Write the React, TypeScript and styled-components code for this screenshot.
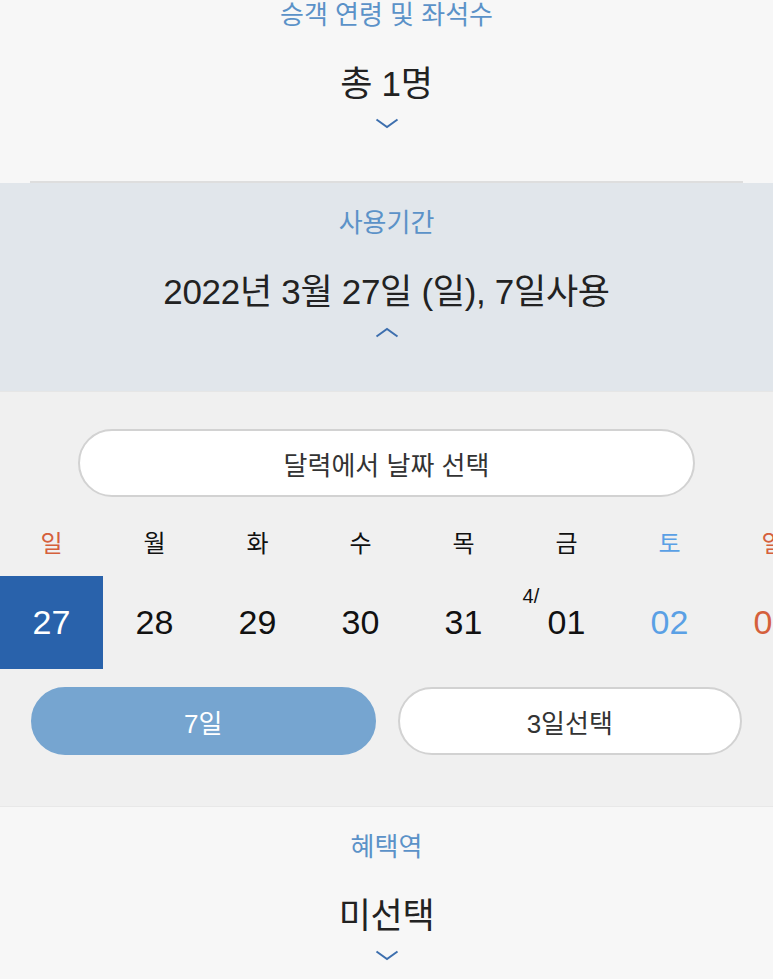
import styled, { createGlobalStyle } from 'styled-components'

const GlobalStyle = createGlobalStyle`
  html, body {
    margin: 0;
    padding: 0;
    background: #f7f7f7;
    overflow: hidden;
  }
  body {
    font-family: "Liberation Sans", "Noto Sans CJK KR", sans-serif;
    color: #222222;
  }
`

const Page = styled.div`
  width: 773px;
  height: 979px;
  overflow: hidden;
  display: flex;
  flex-direction: column;
`

const Section = styled.section<{ $tone?: 'plain' | 'active'; $offset?: number; $divider?: boolean }>`
  flex: none;
  height: 208px;
  box-sizing: border-box;
  margin-top: ${(p) => (p.$offset ? `${p.$offset}px` : '0')};
  padding-top: 26px;
  display: flex;
  flex-direction: column;
  align-items: center;
  background: ${(p) => (p.$tone === 'active' ? '#e1e6eb' : '#f7f7f7')};
  position: relative;

  ${(p) =>
    p.$divider &&
    `
    &::after {
      content: '';
      position: absolute;
      left: 30px;
      right: 30px;
      bottom: 0;
      height: 2px;
      background: #dedede;
    }
  `}
`

const SectionTitle = styled.div`
  font-size: 26px;
  line-height: 28px;
  color: #5b92c8;
`

const SectionValue = styled.div`
  margin-top: 35px;
  font-size: 35px;
  line-height: 40px;
  letter-spacing: -0.3px;
  color: #222222;
`

const ChevronWrap = styled.div`
  margin-top: 14px;
  width: 24px;
  height: 12px;
  display: flex;
`

const Chevron = ({ up }: { up?: boolean }) => (
  <ChevronWrap>
    <svg width="24" height="12" viewBox="0 0 24 12">
      <path
        d={up ? 'M1.5 10.5 L12 3 L22.5 10.5' : 'M1.5 1.5 L12 9 L22.5 1.5'}
        fill="none"
        stroke="#3d6fae"
        strokeWidth="2"
      />
    </svg>
  </ChevronWrap>
)

const Calendar = styled.section`
  flex: none;
  height: 416px;
  box-sizing: border-box;
  padding-top: 37px;
  background: #f0f0f0;
  border-top: 1px solid #e6e6e6;
  border-bottom: 1px solid #e8e8e8;
  display: flex;
  flex-direction: column;
`

const PillButton = styled.button<{ $active?: boolean }>`
  height: 68px;
  border-radius: 34px;
  box-sizing: border-box;
  font-family: "Liberation Sans", "Noto Sans CJK KR", sans-serif;
  font-size: 26px;
  padding: 0;
  cursor: pointer;
  border: ${(p) => (p.$active ? '2px solid #76a5d0' : '2px solid #d2d2d2')};
  background: ${(p) => (p.$active ? '#76a5d0' : '#ffffff')};
  color: ${(p) => (p.$active ? '#ffffff' : '#333333')};
`

const PickerRow = styled.div`
  padding: 0 78px;
  display: flex;
  flex-direction: column;
`

const WeekGrid = styled.div`
  margin-top: 28px;
  display: grid;
  grid-template-columns: repeat(8, 103px);
  width: 773px;
  overflow: hidden;
`

const WeekDay = styled.div<{ $color: string }>`
  height: 32px;
  display: flex;
  align-items: center;
  justify-content: center;
  font-size: 24px;
  color: ${(p) => p.$color};
`

const DateCell = styled.div<{ $color: string; $selected?: boolean }>`
  margin-top: 19px;
  height: 93px;
  display: flex;
  align-items: center;
  justify-content: center;
  font-size: 34px;
  color: ${(p) => (p.$selected ? '#ffffff' : p.$color)};
  background: ${(p) => (p.$selected ? '#2962ab' : 'transparent')};
`

const DateNumber = styled.span`
  position: relative;
`

const MonthMark = styled.span`
  position: absolute;
  left: -25px;
  top: -18px;
  font-size: 20px;
  color: #111111;
`

const DurationRow = styled.div`
  margin-top: 18px;
  padding: 0 31px;
  display: grid;
  grid-template-columns: 1fr 1fr;
  gap: 22px;
`

const RED = '#d5603c'
const BLUE = '#5aa0e5'
const INK = '#111111'

const days = [
  { label: '일', color: RED },
  { label: '월', color: INK },
  { label: '화', color: INK },
  { label: '수', color: INK },
  { label: '목', color: INK },
  { label: '금', color: INK },
  { label: '토', color: BLUE },
  { label: '일', color: RED },
]

const dates = [
  { n: '27', color: RED, selected: true },
  { n: '28', color: INK },
  { n: '29', color: INK },
  { n: '30', color: INK },
  { n: '31', color: INK },
  { n: '01', color: INK, month: '4/' },
  { n: '02', color: BLUE },
  { n: '03', color: RED },
]

export default function App() {
  return (
    <Page>
      <GlobalStyle />
      <Section $offset={-25} $divider>
        <SectionTitle>승객 연령 및 좌석수</SectionTitle>
        <SectionValue>총 1명</SectionValue>
        <Chevron />
      </Section>

      <Section $tone="active">
        <SectionTitle>사용기간</SectionTitle>
        <SectionValue>2022년 3월 27일 (일), 7일사용</SectionValue>
        <Chevron up />
      </Section>

      <Calendar>
        <PickerRow>
          <PillButton>달력에서 날짜 선택</PillButton>
        </PickerRow>

        <WeekGrid>
          {days.map((d, i) => (
            <WeekDay key={i} $color={d.color}>
              {d.label}
            </WeekDay>
          ))}
          {dates.map((d, i) => (
            <DateCell key={i} $color={d.color} $selected={d.selected}>
              <DateNumber>
                {d.month && <MonthMark>{d.month}</MonthMark>}
                {d.n}
              </DateNumber>
            </DateCell>
          ))}
        </WeekGrid>

        <DurationRow>
          <PillButton $active>7일</PillButton>
          <PillButton>3일선택</PillButton>
        </DurationRow>
      </Calendar>

      <Section>
        <SectionTitle>혜택역</SectionTitle>
        <SectionValue>미선택</SectionValue>
        <Chevron />
      </Section>
    </Page>
  )
}
